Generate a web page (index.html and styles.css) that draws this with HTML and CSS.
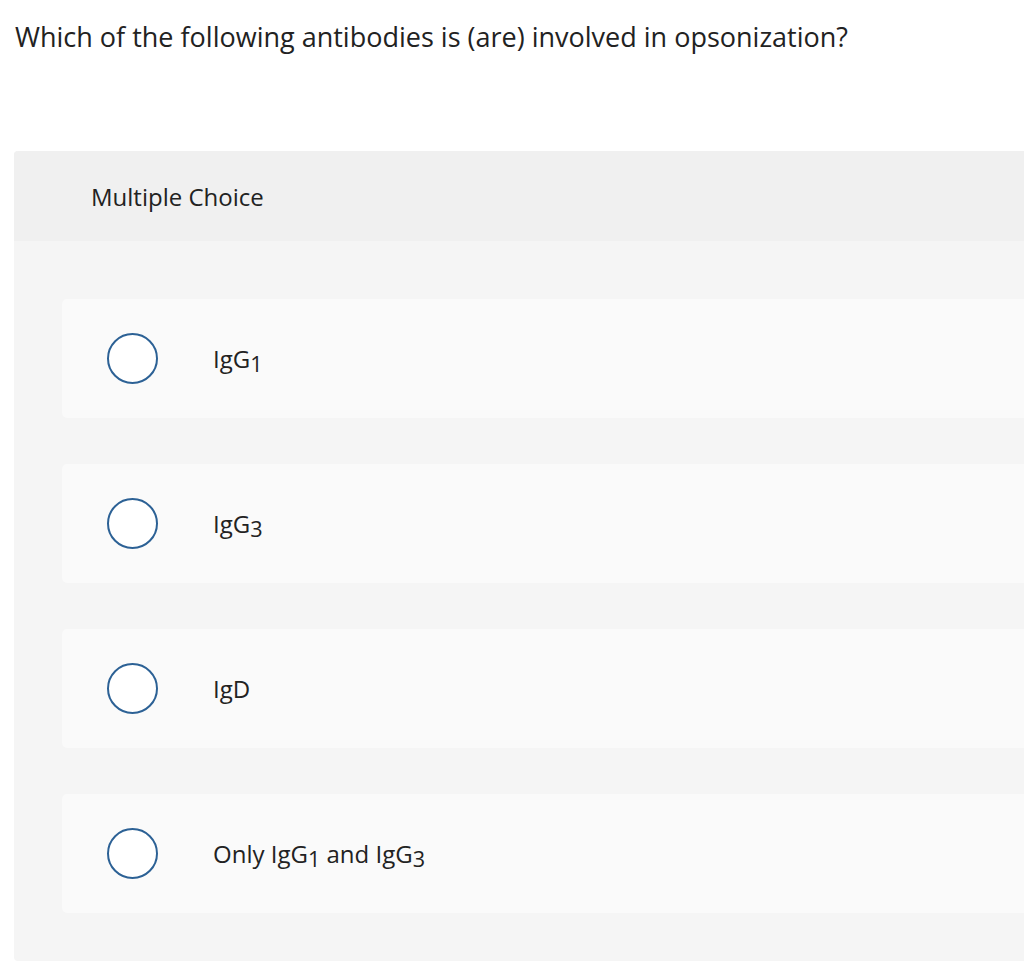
FILE: index.html
```html
<!DOCTYPE html>
<html lang="en">
<head>
<meta charset="utf-8">
<title>Multiple Choice</title>
<link rel="stylesheet" href="styles.css">
</head>
<body>
<div class="page">
  <h1 class="question">Which of the following antibodies is (are) involved in opsonization?</h1>
  <section class="panel">
    <div class="panel-head">Multiple Choice</div>
    <div class="panel-body">
      <label class="option"><span class="radio"></span><span class="label">IgG<sub>1</sub></span></label>
      <label class="option"><span class="radio"></span><span class="label">IgG<sub>3</sub></span></label>
      <label class="option"><span class="radio"></span><span class="label">IgD</span></label>
      <label class="option"><span class="radio"></span><span class="label">Only IgG<sub>1</sub> and IgG<sub>3</sub></span></label>
    </div>
  </section>
</div>
</body>
</html>
```
FILE: styles.css
```css
html, body {
  margin: 0;
  padding: 0;
  background: #ffffff;
  overflow: hidden;
}
body {
  font-family: "Open Sans", "Liberation Sans", sans-serif;
  color: #222222;
}
.page {
  padding: 0 0 0 14px;
}
.question {
  margin: 0;
  padding: 21px 0 0 1px;
  height: 151px;
  box-sizing: border-box;
  font-size: 27px;
  font-weight: 400;
  line-height: 32px;
  letter-spacing: 0;
  color: #222222;
  white-space: nowrap;
}
.panel {
  border-radius: 4px 0 0 4px;
  overflow: hidden;
  background: #f5f5f5;
}
.panel-head {
  height: 90px;
  box-sizing: border-box;
  background: #f0f0f0;
  padding: 0 0 0 77px;
  display: flex;
  align-items: center;
  font-size: 24px;
  color: #222222;
}
.panel-body {
  padding: 58px 0 48px 48px;
  display: flex;
  flex-direction: column;
  gap: 46px;
}
.option {
  height: 119px;
  background: #fafafa;
  border-radius: 5px 0 0 5px;
  display: flex;
  align-items: center;
  padding-left: 45px;
}
.radio {
  width: 51px;
  height: 51px;
  box-sizing: border-box;
  border: 2px solid #2c6195;
  border-radius: 50%;
  background: #ffffff;
  flex: none;
}
.label {
  margin-left: 55px;
  font-size: 24px;
  color: #222222;
}
.label sub {
  font-size: 0.9em;
  vertical-align: -0.2em;
  line-height: 0;
}
```
